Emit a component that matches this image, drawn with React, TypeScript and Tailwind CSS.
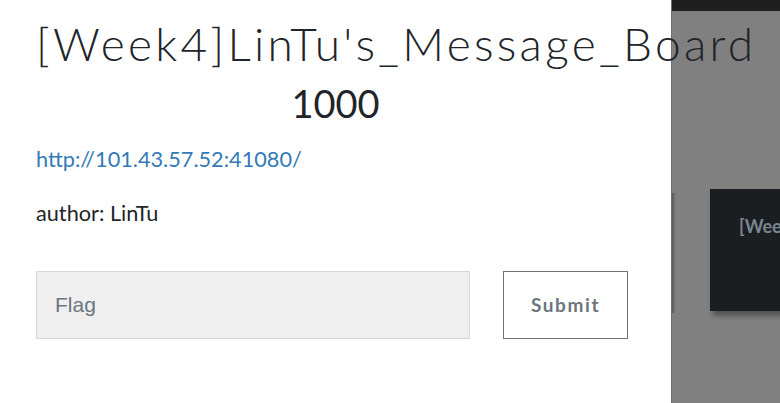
export default function App() {
  return (
    <div className="flex w-[780px] h-[403px] overflow-hidden bg-[#808080]">
      {/* modal */}
      <div className="relative z-10 w-[672px] h-full shrink-0 bg-white border-r border-[#6e6e6e] px-[36px] pt-[16px]">
        <h1
          className="whitespace-nowrap text-[46px] leading-[1.2] font-light tracking-[3.3px] text-[#212529]"
          style={{ fontFamily: "Lato, sans-serif" }}
        >
          [Week4]LinTu's_Message_Board
        </h1>
        <div
          className="text-center text-[38px] leading-[1.2] text-[#212529] mt-[10px]"
          style={{ fontFamily: "Lato, sans-serif" }}
        >
          1000
        </div>
        <div className="mt-[16px] text-[21.7px] leading-[1.5]" style={{ fontFamily: "Lato, sans-serif" }}>
          <a href="#" className="text-[#337ab7]">http://101.43.57.52:41080/</a>
          <p className="mt-[22px] text-[#212529]">author: LinTu</p>
        </div>
        <div className="flex mt-[41px]">
          <input
            placeholder="Flag"
            className="w-[434px] h-[68px] bg-[#efefef] border border-[#d4d7da] px-[18px] text-[21px] placeholder-[#6c757d] outline-none"
            style={{ fontFamily: "'Liberation Sans', Arial, sans-serif" }}
          />
          <button
            className="ml-[33px] w-[125px] h-[68px] border border-[#6c757d] text-[#6c757d] text-[19px] font-bold tracking-[1.6px]"
            style={{ fontFamily: "Lato, sans-serif" }}
          >
            Submit
          </button>
        </div>
      </div>

      {/* dimmed page behind the modal */}
      <div className="flex-1 flex flex-col">
        <div className="h-[11px] bg-[#1f1f1f]"></div>
        <div className="flex mt-[178px]">
          <div className="w-[4px] h-[120px] mt-[4px] bg-gradient-to-r from-[#5a5a5a] to-[#808080]"></div>
          <div className="ml-[34px] flex-1 h-[122px] bg-[#1b1e21] shadow-[3px_5px_5px_rgba(0,0,0,0.35)] pl-[29px] pt-[24px] overflow-hidden">
            <div
              className="whitespace-nowrap text-[18px] font-bold text-[#7b858f]"
              style={{ fontFamily: "Lato, sans-serif" }}
            >
              [Week4]
            </div>
          </div>
        </div>
      </div>
    </div>
  );
}
